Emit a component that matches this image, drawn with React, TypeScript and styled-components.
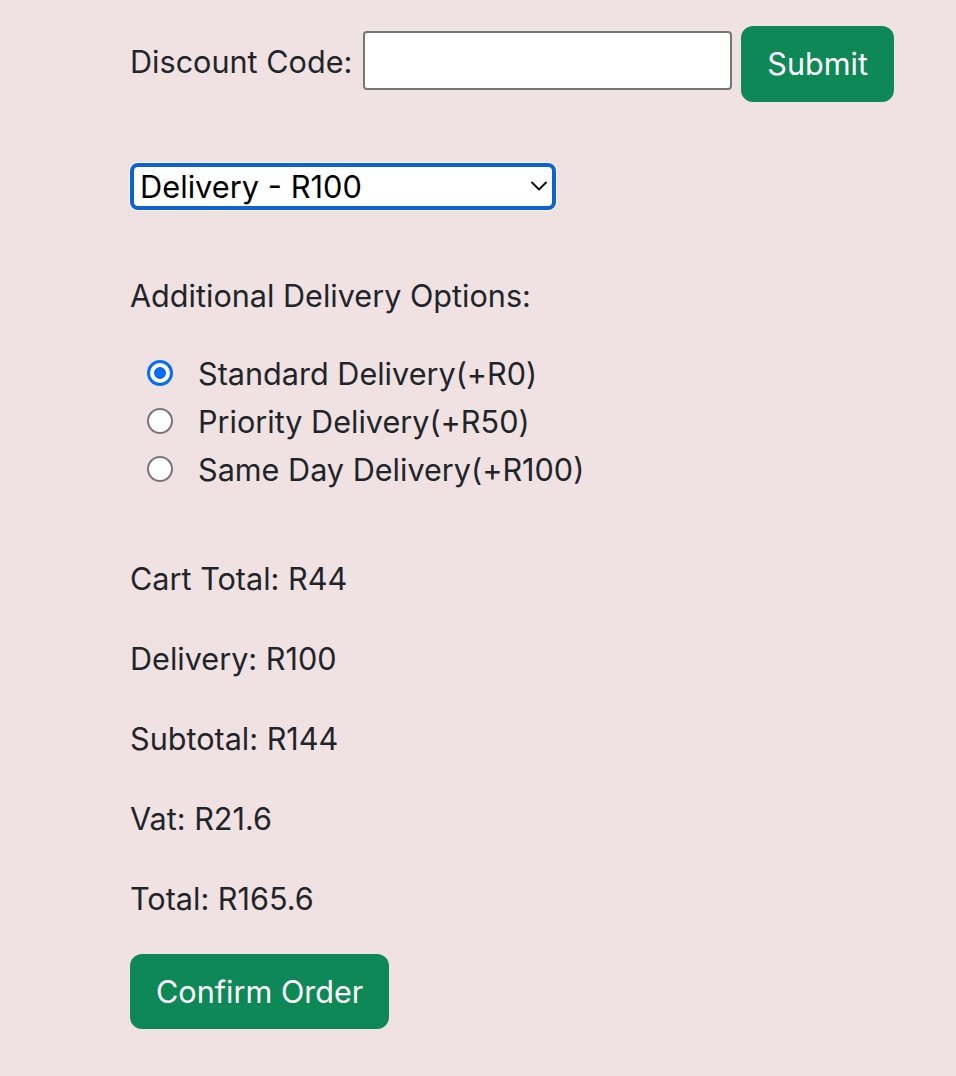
import React, { useState } from "react";
import styled, { createGlobalStyle } from "styled-components";

const Global = createGlobalStyle`
  html, body { margin: 0; padding: 0; background: #f0e2e3; }
  body { font-family: Inter, "Noto Sans", sans-serif; color: #212529; }
`;

const FONT = "30.6px";

const Page = styled.div`
  min-height: 1076px;
  box-sizing: border-box;
  padding: 26px 0 0 130px;
  background: #f0e2e3;
  display: flex;
  flex-direction: column;
  align-items: flex-start;
`;

const DiscountRow = styled.form`
  display: flex;
  align-items: center;
  height: 76px;
  margin: 0;
`;

const Label = styled.label`
  font-size: ${FONT};
  line-height: 48px;
  margin-right: 11px;
  margin-bottom: 4px;
`;

const TextInput = styled.input`
  box-sizing: border-box;
  width: 369px;
  height: 59px;
  border: 2px solid #767676;
  border-radius: 4px;
  background: #fff;
  margin: 0 9px 7px 0;
  font-size: 28px;
  padding: 0 8px;
  outline: none;
`;

const GreenButton = styled.button`
  box-sizing: border-box;
  height: 76px;
  padding: 0 26px;
  border: none;
  border-radius: 12px;
  background: #0e8856;
  color: #fff;
  font-family: Inter, "Noto Sans", sans-serif;
  font-size: ${FONT};
  line-height: 48px;
  cursor: pointer;
`;

const SelectWrap = styled.div`
  position: relative;
  margin-top: 61px;
  width: 426px;
  height: 47px;
  box-sizing: border-box;
  border: 4px solid #0b63cf;
  border-radius: 8px;
  background: #fff;
  box-shadow: 0 0 0 1px rgba(255, 255, 255, 0.7);
`;

const Select = styled.select`
  appearance: none;
  -webkit-appearance: none;
  width: 100%;
  height: 100%;
  border: none;
  background: transparent;
  font-family: Inter, "Noto Sans", sans-serif;
  font-size: 30.8px;
  color: #000;
  padding: 0 0 0 6px;
  outline: none;
`;

const Chevron = styled.svg`
  position: absolute;
  right: 3px;
  top: 12px;
  pointer-events: none;
`;

const Heading = styled.div`
  margin-top: 62px;
  font-size: ${FONT};
  line-height: 48px;
`;

const RadioList = styled.div`
  margin-top: 29px;
  padding-left: 17px;
  display: flex;
  flex-direction: column;
`;

const RadioRow = styled.label`
  display: flex;
  align-items: center;
  height: 48px;
  font-size: ${FONT};
`;

const Radio = styled.input`
  appearance: none;
  -webkit-appearance: none;
  box-sizing: border-box;
  width: 26px;
  height: 26px;
  margin: 0 25px 0 0;
  border-radius: 50%;
  border: 2px solid #767676;
  background: #fff;
  &:checked {
    border: 3px solid #0a6cf6;
    background: radial-gradient(circle, #0a6cf6 0 5.5px, #fff 6.3px);
  }
`;

const Summary = styled.div`
  margin-top: 62px;
  display: flex;
  flex-direction: column;
  gap: 32px;
`;

const Line = styled.p`
  margin: 0;
  font-size: ${FONT};
  line-height: 48px;
`;

const ConfirmButton = styled(GreenButton)`
  margin-top: 31px;
  height: 75px;
`;

export default function App() {
  const [delivery, setDelivery] = useState("standard");
  const options = [
    { id: "standard", label: "Standard Delivery(+R0)" },
    { id: "priority", label: "Priority Delivery(+R50)" },
    { id: "sameday", label: "Same Day Delivery(+R100)" },
  ];
  return (
    <Page>
      <Global />
      <DiscountRow onSubmit={(e) => e.preventDefault()}>
        <Label htmlFor="code">Discount Code:</Label>
        <TextInput id="code" type="text" />
        <GreenButton type="submit">Submit</GreenButton>
      </DiscountRow>
      <SelectWrap>
        <Select defaultValue="delivery">
          <option value="delivery">Delivery - R100</option>
          <option value="collect">Collect - R0</option>
        </Select>
        <Chevron width="20" height="14" viewBox="0 0 20 14">
          <path d="M3 3.5 L10 10.5 L17 3.5" fill="none" stroke="#111" strokeWidth="2" strokeLinecap="round" strokeLinejoin="round" />
        </Chevron>
      </SelectWrap>
      <Heading>Additional Delivery Options:</Heading>
      <RadioList>
        {options.map((o) => (
          <RadioRow key={o.id}>
            <Radio
              type="radio"
              name="delivery"
              checked={delivery === o.id}
              onChange={() => setDelivery(o.id)}
            />
            {o.label}
          </RadioRow>
        ))}
      </RadioList>
      <Summary>
        <Line>Cart Total: R44</Line>
        <Line>Delivery: R100</Line>
        <Line>Subtotal: R144</Line>
        <Line>Vat: R21.6</Line>
        <Line>Total: R165.6</Line>
      </Summary>
      <ConfirmButton type="button">Confirm Order</ConfirmButton>
    </Page>
  );
}
